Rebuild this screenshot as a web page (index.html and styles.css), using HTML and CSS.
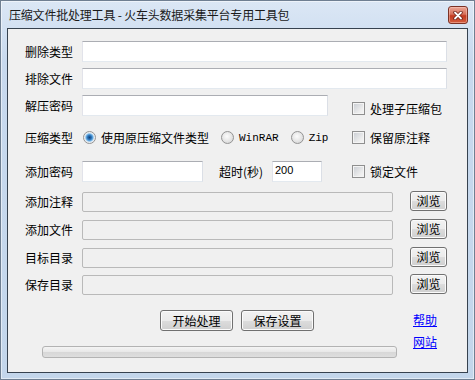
FILE: index.html
```html
<!DOCTYPE html>
<html lang="zh-CN">
<head>
  <meta charset="UTF-8" />
  <title>压缩文件批处理工具</title>
  <link rel="stylesheet" href="styles.css">
</head>
<body>

  <div class="window">
    <div class="titlebar">
      <span class="title">压缩文件批处理工具 - 火车头数据采集平台专用工具包</span>
      <button class="close" title="关闭">
        <svg width="10" height="9" viewBox="0 0 10 9">
          <path d="M2 1.5 L8 7.5 M8 1.5 L2 7.5" stroke="#6b2016" stroke-width="3.4" stroke-linecap="round" />
          <path d="M2 1.5 L8 7.5 M8 1.5 L2 7.5" stroke="#ffffff" stroke-width="1.8" stroke-linecap="round" />
        </svg>
      </button>
    </div>

    <div class="client">
      <div class="row r1">
        <label class="lbl">删除类型</label>
        <input type="text" class="txt wide" />
      </div>

      <div class="row r2">
        <label class="lbl">排除文件</label>
        <input type="text" class="txt wide" />
      </div>

      <div class="row split r3">
        <div class="left">
          <label class="lbl">解压密码</label>
          <input type="text" class="txt pwd" />
        </div>
        <div class="opt low"><span class="check"></span>处理子压缩包</div>
      </div>

      <div class="row split r4">
        <div class="left">
          <label class="lbl">压缩类型</label>
          <span class="radio on first"></span><span class="rtext">使用原压缩文件类型</span>
          <span class="radio"></span><span class="rtext mono">WinRAR</span>
          <span class="radio"></span><span class="rtext mono">Zip</span>
        </div>
        <div class="opt"><span class="check"></span>保留原注释</div>
      </div>

      <div class="row split r5">
        <div class="left">
          <label class="lbl">添加密码</label>
          <input type="text" class="txt short" />
          <label class="sec-label">超时(秒)</label>
          <input type="text" class="txt sec" value="200" />
        </div>
        <div class="opt"><span class="check"></span>锁定文件</div>
      </div>

      <div class="row path r6">
        <label class="lbl">添加注释</label>
        <input type="text" class="txt dis" disabled />
        <button class="btn browse">浏览</button>
      </div>

      <div class="row path r7">
        <label class="lbl">添加文件</label>
        <input type="text" class="txt dis" disabled />
        <button class="btn browse">浏览</button>
      </div>

      <div class="row path r8">
        <label class="lbl">目标目录</label>
        <input type="text" class="txt dis" disabled />
        <button class="btn browse">浏览</button>
      </div>

      <div class="row path r9">
        <label class="lbl">保存目录</label>
        <input type="text" class="txt dis" disabled />
        <button class="btn browse">浏览</button>
      </div>

      <div class="bottom">
        <div class="bottom-main">
          <div class="actions">
            <button class="btn action">开始处理</button>
            <button class="btn action">保存设置</button>
          </div>
          <div class="progress"></div>
        </div>
        <div class="links">
          <a href="#">帮助</a>
          <a href="#">网站</a>
        </div>
      </div>
    </div>
  </div>

</body>
</html>
```

FILE: styles.css
```css
* {
  box-sizing: border-box;
}

body {
  margin: 0;
  font-family: "Noto Sans CJK SC", sans-serif;
  font-size: 12px;
  line-height: 14px;
  color: #000;
}

.window {
  width: 475px;
  height: 380px;
  display: flex;
  flex-direction: column;
  border: 1px solid #6f7f92;
  background: linear-gradient(#dbe7f5, #c8d9ee 60px, #c3d6eb);
  box-shadow: inset 0 0 0 1px rgba(255,255,255,0.5);
}

.titlebar {
  height: 27px;
  display: flex;
  align-items: center;
  justify-content: space-between;
  padding: 0 6px 0 8px;
}

.title {
  color: #1a1a1a;
  letter-spacing: -0.2px;
}

.close {
  align-self: flex-start;
  margin-top: 5px;
  width: 20px;
  height: 18px;
  padding: 0;
  border: 1px solid #7b3226;
  border-radius: 3px;
  background: linear-gradient(#eba797, #d7705a 45%, #c23a20 55%, #d35d3f);
  box-shadow: inset 0 0 0 1px rgba(255,210,200,0.45);
  display: flex;
  align-items: center;
  justify-content: center;
}

.client {
  flex: 1;
  margin: 0 6px 6px;
  border: 1px solid #36424f;
  background-color: #f0f0f0;
  padding: 12px 20px 0 17px;
}

.row {
  display: flex;
  align-items: center;
  height: 21px;
}

.r2, .r3 { margin-top: 6px; }
.r4 { margin-top: 11px; }
.r5 { margin-top: 13px; }
.r6 { margin-top: 9px; }
.r7, .r8 { margin-top: 7px; }
.r9 { margin-top: 6px; }

.split {
  display: grid;
  grid-template-columns: 327px auto;
  align-items: center;
}

.left {
  display: flex;
  align-items: center;
}

.lbl {
  width: 57px;
  flex-shrink: 0;
}

.txt {
  height: 21px;
  padding: 0 3px;
  border: 1px solid;
  border-color: #abadb3 #dbdfe6 #e3e9ef #e2e3ea;
  background-color: #fff;
  font-family: "Liberation Sans", sans-serif;
  font-size: 12px;
  color: #000;
  outline: none;
}

.wide { width: 365px; }
.pwd { width: 246px; }
.short { width: 121px; }

.sec-label {
  width: 53px;
  margin-left: 16px;
}

.sec {
  width: 50px;
  padding: 0 2px 3px;
  font-size: 11px;
}

.dis {
  width: 312px;
  height: 20px;
  align-self: flex-end;
  background-color: #f0f0f0;
  border: 1px solid #b9b9b9;
  border-radius: 2px;
}

/* radio + checkbox drawn like the classic win7 controls */
.radio {
  width: 13px;
  height: 13px;
  flex-shrink: 0;
  border-radius: 50%;
  border: 1px solid #939393;
  background: radial-gradient(circle at 45% 40%, #fcfcfc, #e2e2e2 60%, #cdcdcd);
  margin: 0 5px 0 7px;
}

.radio.first {
  margin-left: 1px;
}

.radio.on {
  background: radial-gradient(circle, #12427a 0, #2a72b8 2px, #6fb2e6 3.5px, #d9e6f1 4.5px, #f4f4f4 5.5px);
}

.rtext {
  margin-right: 5px;
}

.rtext.mono {
  font-family: "Liberation Mono", monospace;
  font-size: 11px;
}

.opt {
  display: flex;
  align-items: center;
  gap: 5px;
}

.opt.low {
  margin-top: 6px;
}

.check {
  width: 13px;
  height: 13px;
  border: 1px solid #8f8f8f;
  background: linear-gradient(135deg, #c8ccd2, #eeeeee 70%, #f6f6f6);
  box-shadow: inset 0 0 0 1px #f4f4f4;
}

.btn {
  padding: 0;
  border: 1px solid #707070;
  border-radius: 3px;
  background: linear-gradient(#f2f2f2, #ebebeb 50%, #dddddd 50%, #cfcfcf);
  box-shadow: inset 0 0 0 1px #fbfbfb;
  font-family: "Noto Sans CJK SC", sans-serif;
  font-size: 12px;
  line-height: 14px;
  color: #000;
}

.browse {
  width: 37px;
  height: 20px;
  margin-left: 17px;
  align-self: flex-start;
}

.bottom {
  display: flex;
  margin-top: 15px;
}

.bottom-main {
  width: 372px;
}

.actions {
  display: flex;
  gap: 8px;
  padding-left: 135px;
}

.action {
  width: 73px;
  height: 21px;
}

.progress {
  width: 355px;
  height: 12px;
  margin: 15px 0 0 17px;
  border: 1px solid #b3b3b3;
  border-radius: 3px;
  background: linear-gradient(#f4f4f4, #e8e8e8 50%, #d8d8d8 55%, #dedede);
}

.links {
  display: flex;
  flex-direction: column;
  gap: 8px;
  margin: 3px 0 0 16px;
}

.links a {
  color: #0000ff;
  text-decoration: underline;
}
```
